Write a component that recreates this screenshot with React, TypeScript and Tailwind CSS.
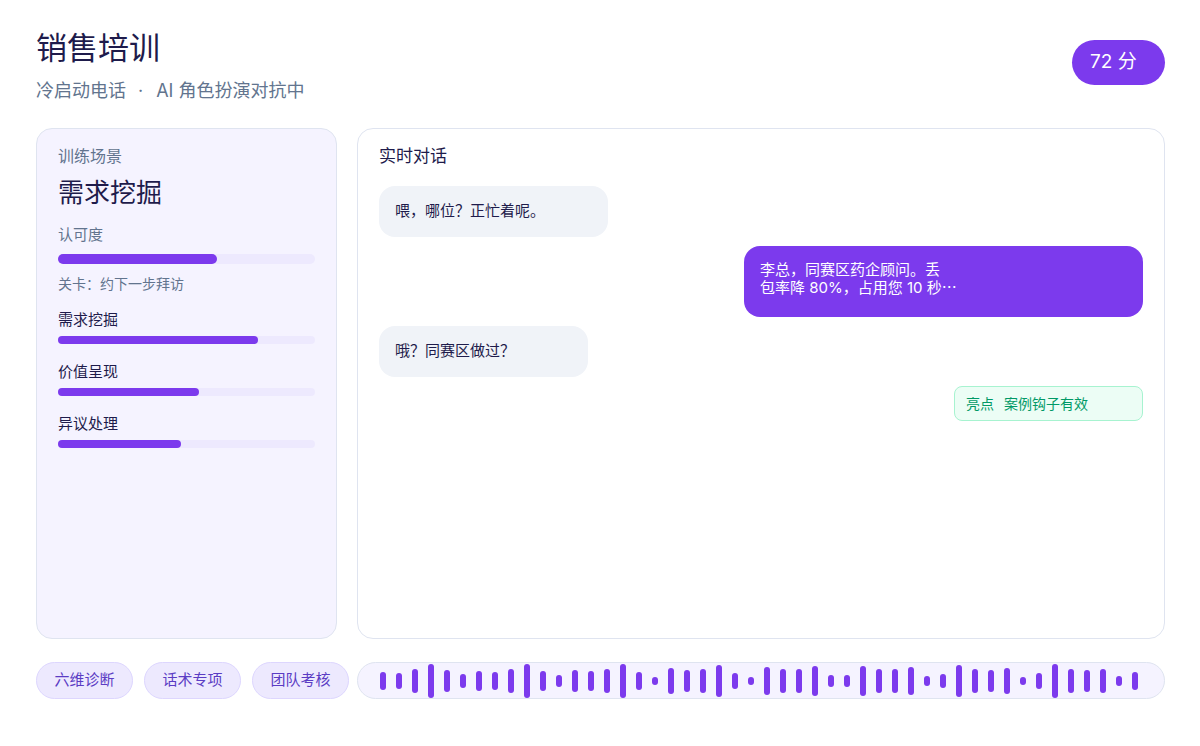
import React from 'react';

const bars = [
  18, 16, 24, 34, 22, 14, 20, 18, 24, 34, 20, 12, 22, 20, 24, 34, 18, 8, 26, 22, 24, 32, 16, 8,
  28, 24, 24, 30, 12, 12, 30, 24, 24, 28, 10, 14, 32, 24, 22, 26, 8, 16, 34, 24, 22, 24, 10, 18,
];

const skills = [
  { label: '需求挖掘', pct: 78 },
  { label: '价值呈现', pct: 55 },
  { label: '异议处理', pct: 48 },
];

const tabs = ['六维诊断', '话术专项', '团队考核'];

export default function App() {
  return (
    <div
      className="h-[746px] w-[1200px] bg-white flex flex-col pl-[36px] pr-[35px] pt-[30px] pb-[47px] text-[#1e1b4b]"
      style={{ fontFamily: 'Inter, "Noto Sans CJK SC", sans-serif' }}
    >
      {/* header */}
      <div className="flex items-start justify-between">
        <div>
          <div className="text-[31px] leading-[36px]">销售培训</div>
          <div className="mt-[11px] text-[18px] leading-[28px] text-slate-500">
            冷启动电话<span className="ml-[12px] mr-[13px]">·</span>AI 角色扮演对抗中
          </div>
        </div>
        <div className="mt-[10px] h-[45px] w-[93px] rounded-full bg-[#7c3aed] text-white text-[19px] flex items-center pl-[18px]">
          72 分
        </div>
      </div>

      {/* main */}
      <div className="mt-[23px] flex-1 flex gap-[20px] min-h-0">
        <div className="w-[301px] shrink-0 rounded-2xl border border-[#dfe4f0] bg-[#f5f3ff] pl-[21px] pr-[21px] pt-[15px]">
          <div className="text-[16px] leading-[24px] text-slate-500">训练场景</div>
          <div className="mt-[8px] text-[26px] leading-[34px]">需求挖掘</div>
          <div className="mt-[14px] text-[15px] leading-[22px] text-slate-500">认可度</div>
          <div className="mt-[8px] h-[10px] rounded-full bg-[#ede9fe]">
            <div className="h-full rounded-full bg-[#7c3aed] w-[62%]" />
          </div>
          <div className="mt-[10px] text-[14px] leading-[20px] text-slate-500">关卡：约下一步拜访</div>
          <div className="mt-[15px] flex flex-col gap-[17px]">
            {skills.map(s => (
              <div key={s.label}>
                <div className="text-[15px] leading-[22px]">{s.label}</div>
                <div className="mt-[5px] h-[8px] rounded-full bg-[#ede9fe]">
                  <div className="h-full rounded-full bg-[#7c3aed]" style={{ width: `${s.pct}%` }} />
                </div>
              </div>
            ))}
          </div>
        </div>

        <div className="flex-1 rounded-2xl border border-[#dfe4f0] bg-white px-[21px] pt-[15px]">
          <div className="text-[17px] leading-[24px]">实时对话</div>
          <div className="mt-[18px] flex flex-col gap-[9px] text-[15px]">
            <div className="w-[229px] h-[51px] flex items-center rounded-2xl bg-[#f0f3f8] px-[16px]">喂，哪位？正忙着呢。</div>
            <div className="ml-auto w-[399px] rounded-2xl bg-[#7c3aed] text-white px-[16px] pt-[15px] pb-[21px] leading-[17px]">
              李总，同赛区药企顾问。丢
              <br />
              包率降 80%，占用您 10 秒<span style={{ fontFamily: '"Noto Sans CJK SC", sans-serif' }}>…</span>
            </div>
            <div className="w-[209px] h-[51px] flex items-center rounded-2xl bg-[#f0f3f8] px-[16px]">哦？同赛区做过？</div>
            <div className="ml-auto w-[189px] h-[35px] rounded-lg border border-[#a7f3d0] bg-[#ecfdf5] text-emerald-600 text-[14px] flex items-center px-[11px] gap-[10px]">
              <span>亮点</span>
              <span>案例钩子有效</span>
            </div>
          </div>
        </div>
      </div>

      {/* bottom */}
      <div className="mt-[23px] h-[37px] flex">
        <div className="flex gap-[11px]">
          {tabs.map(t => (
            <div key={t} className="w-[97px] h-[37px] rounded-full border border-[#ddd6fe] bg-[#ede9fe] text-[#5b3cc4] text-[15px] flex items-center justify-center">
              {t}
            </div>
          ))}
        </div>
        <div className="ml-[8px] flex-1 h-[37px] rounded-full border border-[#dfe4f0] bg-[#f5f3ff] flex items-center gap-[10px] pl-[22px]">
          {bars.map((h, i) => (
            <div key={i} className="w-[6px] rounded-full bg-[#7c3aed] shrink-0" style={{ height: h }} />
          ))}
        </div>
      </div>
    </div>
  );
}
